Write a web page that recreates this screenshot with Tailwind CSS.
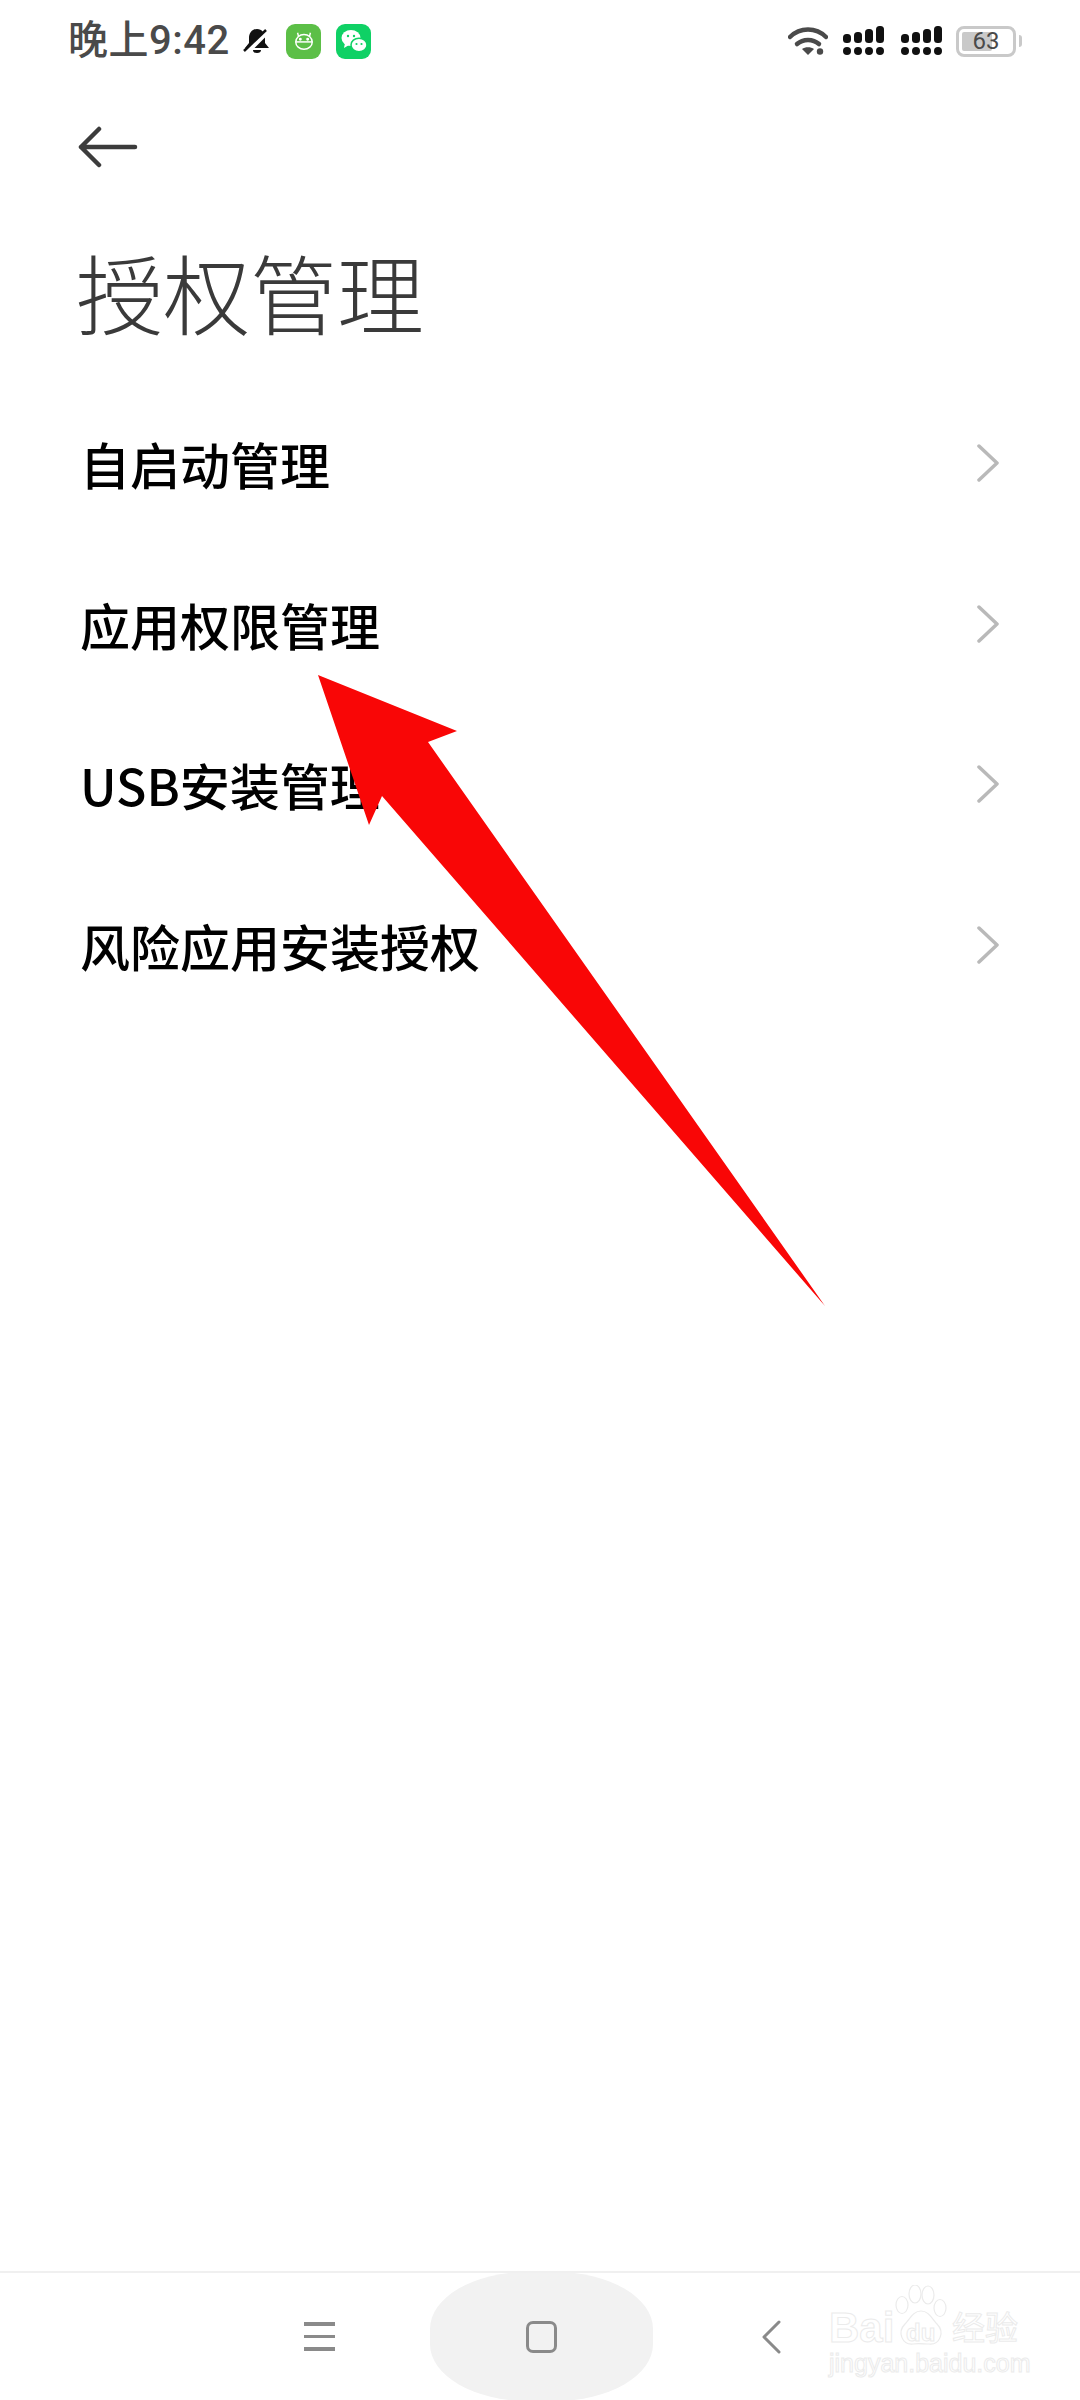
<!DOCTYPE html>
<html lang="zh-CN">
  <head>
    <meta charset="UTF-8" />
    <meta name="viewport" content="width=device-width, initial-scale=1.0" />
    <title>授权管理</title>
    <script src="https://cdn.jsdelivr.net/npm/@tailwindcss/browser@4"></script>
  </head>
  <body class="bg-white">
    <div class="relative w-[1080px] h-[2400px] overflow-hidden bg-white flex flex-col font-['Noto_Sans_CJK_SC','Noto_Sans',sans-serif]">
      <!-- status bar -->
      <div class="h-[82px] pl-[68px] pr-[58px] flex items-center shrink-0">
        <span class="text-[40px] leading-none font-medium text-[#4a4a4a] font-['Roboto','Noto_Sans_CJK_SC',sans-serif] w-[158px] whitespace-nowrap tracking-[0.5px]">晚上9:42</span>
        <svg class="w-[30px] h-[30px] ml-[16px]" viewBox="0 0 30 30">
          <path d="M15 3c-5 0-8 4-8 9v5l-4 5h24l-4-5v-5c0-5-3-9-8-9z" fill="#111" />
          <path d="M11 24h8a4 3 0 0 1-8 0z" fill="#111" />
          <path d="M4 27L26 5" stroke="#fff" stroke-width="5" />
          <path d="M2 25L24 4" stroke="#111" stroke-width="2.5" />
        </svg>
        <div class="w-[35px] h-[35px] ml-[14px] rounded-[9px] bg-[#5cbf47] flex items-center justify-center">
          <svg class="w-[22px] h-[22px]" viewBox="0 0 24 24" fill="none" stroke="#fff" stroke-width="1.6">
            <path d="M6 7L5 3M18 7l1-4" />
            <ellipse cx="12" cy="13" rx="9" ry="8" />
            <path d="M3 13h18" />
            <circle cx="8" cy="10" r="0.8" fill="#fff" />
            <circle cx="16" cy="10" r="0.8" fill="#fff" />
          </svg>
        </div>
        <div class="w-[35px] h-[35px] ml-[15px] rounded-[9px] bg-[#0fd165] flex items-center justify-center">
          <svg class="w-[30px] h-[30px]" viewBox="0 0 30 30">
            <ellipse cx="12" cy="12" rx="9.5" ry="8" fill="#fff" />
            <path d="M6 17l-1 5 5-3z" fill="#fff" />
            <ellipse cx="20" cy="19" rx="8" ry="6.8" fill="#fff" stroke="#0fd165" stroke-width="1.5" />
            <circle cx="9" cy="10" r="1.2" fill="#0fd165" />
            <circle cx="15" cy="10" r="1.2" fill="#0fd165" />
            <circle cx="17.500" cy="18" r="1.100" fill="#0fd165" />
            <circle cx="22.500" cy="18" r="1.100" fill="#0fd165" />
          </svg>
        </div>
        <svg class="w-[40px] h-[30px] ml-auto" viewBox="0 0 40 30" fill="none">
          <path d="M2 11C12 1 28 1 38 11" stroke="#4a4a4a" stroke-width="4.500" stroke-linecap="round" />
          <path d="M9 18c6-5.500 16-5.500 22 0" stroke="#4a4a4a" stroke-width="4.500" stroke-linecap="round" />
          <path d="M14 23c3-2.500 9-2.500 12 0l-6 6z" fill="#4a4a4a" />
          <circle cx="32" cy="25.500" r="3.200" fill="#4a4a4a" />
        </svg>
        <svg class="w-[42px] h-[30px] ml-[15px]" viewBox="0 0 42 30" fill="#111">
          <rect x="0" y="8" width="8" height="9" rx="3.500" />
          <rect x="11" y="6" width="8" height="11" rx="3.500" />
          <rect x="22" y="3" width="8" height="14" rx="3.500" />
          <rect x="33" y="0" width="8" height="17" rx="3.500" />
          <circle cx="4" cy="25" r="4" />
          <circle cx="15" cy="25" r="4" />
          <circle cx="26" cy="25" r="4" />
          <circle cx="37" cy="25" r="4" />
        </svg>
        <svg class="w-[42px] h-[30px] ml-[16px]" viewBox="0 0 42 30" fill="#111">
          <rect x="0" y="8" width="8" height="9" rx="3.500" />
          <rect x="11" y="6" width="8" height="11" rx="3.500" />
          <rect x="22" y="3" width="8" height="14" rx="3.500" />
          <rect x="33" y="0" width="8" height="17" rx="3.500" />
          <circle cx="4" cy="25" r="4" />
          <circle cx="15" cy="25" r="4" />
          <circle cx="26" cy="25" r="4" />
          <circle cx="37" cy="25" r="4" />
        </svg>
        <div class="relative w-[60px] h-[31px] ml-[13px] rounded-[8px] border-[3px] border-[#c9c9c9] flex items-center justify-center">
          <div class="absolute left-[3px] top-[3px] bottom-[3px] w-[30px] rounded-[2px] bg-[#c9c9c9]"></div>
          <span class="relative text-[24px] leading-none text-[#4a4a4a] font-['Roboto',sans-serif]">63</span>
        </div>
        <div class="w-[3px] h-[12px] ml-[3px] rounded-r-full bg-[#c9c9c9]"></div>
      </div>

      <!-- back -->
      <div class="pl-[78px] pt-[44px] shrink-0">
        <svg class="w-[60px] h-[42px] block" viewBox="0 0 60 42" fill="none" stroke="#3c3c3c" stroke-width="4.500" stroke-linecap="round" stroke-linejoin="round">
          <path d="M21 3L3 21l18 18M3 21h54" />
        </svg>
      </div>

      <!-- title -->
      <h1 class="pl-[76px] mt-[73px] h-[100px] text-[87px] leading-[100px] font-light text-[#3a3a3a] shrink-0">授权管理</h1>

      <!-- rows -->
      <ul class="mt-[42px]">
        <li class="h-[160.500px] pl-[80px] pr-[80px] flex items-center justify-between">
          <span class="text-[50px] leading-none font-medium text-black">自启动管理</span>
          <svg class="w-[24px] h-[38px]" viewBox="0 0 24 38" fill="none" stroke="#b9b9b9" stroke-width="3.500" stroke-linecap="round" stroke-linejoin="round"><path d="M3 2l18 17L3 36" /></svg>
        </li>
        <li class="h-[160.500px] pl-[80px] pr-[80px] flex items-center justify-between">
          <span class="text-[50px] leading-none font-medium text-black">应用权限管理</span>
          <svg class="w-[24px] h-[38px]" viewBox="0 0 24 38" fill="none" stroke="#b9b9b9" stroke-width="3.500" stroke-linecap="round" stroke-linejoin="round"><path d="M3 2l18 17L3 36" /></svg>
        </li>
        <li class="h-[160.500px] pl-[80px] pr-[80px] flex items-center justify-between">
          <span class="text-[50px] leading-none font-medium text-black">USB安装管理</span>
          <svg class="w-[24px] h-[38px]" viewBox="0 0 24 38" fill="none" stroke="#b9b9b9" stroke-width="3.500" stroke-linecap="round" stroke-linejoin="round"><path d="M3 2l18 17L3 36" /></svg>
        </li>
        <li class="h-[160.500px] pl-[80px] pr-[80px] flex items-center justify-between">
          <span class="text-[50px] leading-none font-medium text-black">风险应用安装授权</span>
          <svg class="w-[24px] h-[38px]" viewBox="0 0 24 38" fill="none" stroke="#b9b9b9" stroke-width="3.500" stroke-linecap="round" stroke-linejoin="round"><path d="M3 2l18 17L3 36" /></svg>
        </li>
      </ul>

      <!-- bottom nav -->
      <div class="mt-auto h-[129px] shrink-0 border-t-2 border-[#f0f0f0] flex items-center relative overflow-hidden">
        <div class="ml-[304px] w-[31px] flex flex-col gap-[9px]">
          <div class="h-[3.500px] bg-[#8a8a8a]"></div>
          <div class="h-[3.500px] bg-[#8a8a8a]"></div>
          <div class="h-[3.500px] bg-[#8a8a8a]"></div>
        </div>
        <div class="ml-[95px] w-[223px] h-[129px] rounded-[44%] bg-[#f2f2f2] flex items-center justify-center">
          <div class="w-[31px] h-[32px] rounded-[7px] border-[3px] border-[#8a8a8a]"></div>
        </div>
        <svg class="ml-[108px] w-[20px] h-[34px]" viewBox="0 0 20 34" fill="none" stroke="#8a8a8a" stroke-width="3" stroke-linecap="round" stroke-linejoin="round"><path d="M18 2L3 17l15 15" /></svg>
      </div>

      <!-- red arrow annotation -->
      <svg class="absolute left-0 top-0 w-[1080px] h-[2400px] pointer-events-none" viewBox="0 0 1080 2400">
        <polygon points="318,675 457,731 428,742 825,1306 382,796 369,825" fill="#f90606" />
      </svg>

      <!-- watermark -->
      <div class="absolute left-[829px] top-[2285px] w-[195px] h-[95px] font-['Liberation_Sans',sans-serif] text-white [-webkit-text-stroke:1px_#ebebeb]">
        <svg class="absolute left-[62px] top-0 w-[60px] h-[62px]" viewBox="0 0 60 62" fill="none" stroke="#ebebeb" stroke-width="1.200">
          <ellipse cx="24" cy="9" rx="6" ry="9" />
          <ellipse cx="37" cy="10" rx="6" ry="9" />
          <ellipse cx="11" cy="20" rx="6" ry="8.500" />
          <ellipse cx="49" cy="23" rx="6" ry="8.500" />
          <path d="M30 26c8 0 11 8 16 13 8 8 3 21-8 20-5 0-11-1-16 0-11 1-16-12-8-20 5-5 8-13 16-13z" />
        </svg>
        <span class="absolute left-0 top-[22px] text-[42px] leading-none font-bold">Bai</span>
        <span class="absolute left-[77px] top-[36px] text-[24px] leading-none font-bold">du</span>
        <span class="absolute left-[123px] top-[25px] text-[33px] leading-none font-['Noto_Sans_CJK_SC',sans-serif] whitespace-nowrap">经验</span>
        <span class="absolute left-0 top-[66px] text-[25px] leading-none whitespace-nowrap">jingyan.baidu.com</span>
      </div>
    </div>
  </body>
</html>
